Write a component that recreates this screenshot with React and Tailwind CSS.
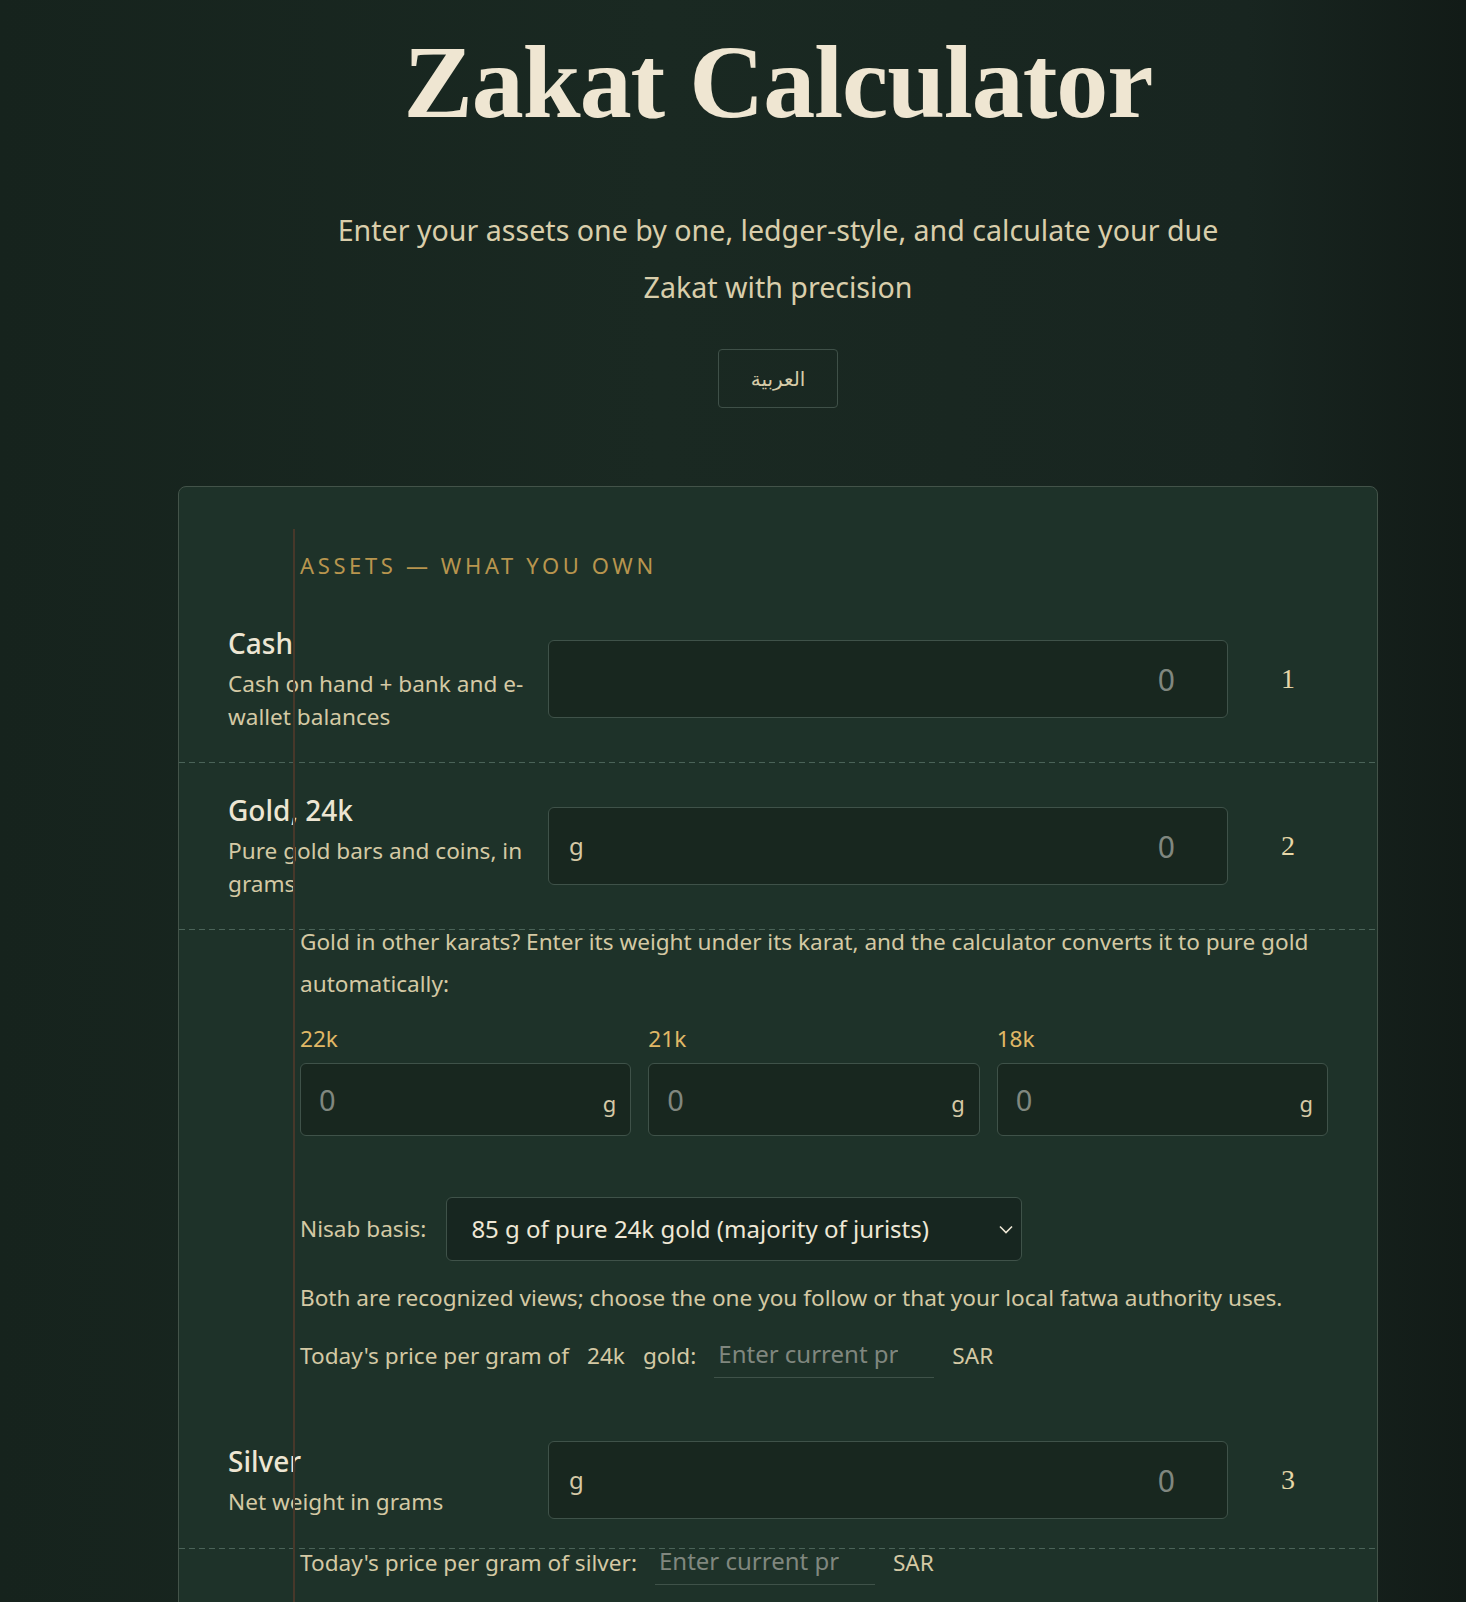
import React from 'react'

const sans = "font-['Noto_Sans','DejaVu_Sans',sans-serif]"

const Dashed = () => (
  <div className="h-px bg-[repeating-linear-gradient(90deg,#4a6358_0_6px,transparent_6px_10px)]" />
)

const AssetRow = ({ title, description, prefix, number }) => (
  <>
    <div className="grid grid-cols-[300px_1fr_80px] items-center gap-x-5 px-[49px] py-[29px]">
      <div className="flex flex-col gap-[6px]">
        <h3 className="text-[28px] leading-[36px] font-medium text-[#ede6d3]">{title}</h3>
        <p className="text-[22.6px] leading-[33px] text-[#d4c9a4]">{description}</p>
      </div>
      <div className="flex h-[78px] items-center rounded-md border border-[#3f5249] bg-[#18271f] pl-5 pr-[52px]">
        {prefix && <span className="text-[24px] text-[#d5c9a6]">{prefix}</span>}
        <input
          placeholder="0"
          className="h-full min-w-0 flex-1 bg-transparent text-right text-[30px] text-[#ede6d3] outline-none placeholder:text-[#80877f]"
        />
      </div>
      <div className="text-center font-['Liberation_Serif',serif] text-[28px] text-[#e6d7a7]">{number}</div>
    </div>
    <Dashed />
  </>
)

const PriceRow = ({ children, className = '' }) => (
  <div className={`flex h-[44px] items-center gap-[18px] text-[22.6px] text-[#d4c9a4] ${className}`}>
    {children}
    <input
      placeholder="Enter current price"
      className="h-[44px] w-[220px] border-b border-[#3f5249] bg-transparent pb-1 pl-1 pr-[36px] text-[24px] text-[#ede6d3] outline-none placeholder:text-[#80877f]"
    />
    <span>SAR</span>
  </div>
)

const karats = ['22k', '21k', '18k']

export default function App() {
  return (
    <div className={`min-h-screen bg-[linear-gradient(90deg,#16231d_0%,#1a2922_45%,#182520_85%,#121b17_100%)] pb-24 ${sans}`}>
      <div className="ml-[178px] w-[1200px]">
        <header className="flex flex-col items-center pt-[30px] text-center">
          <h1 className="font-['Liberation_Serif',serif] text-[104px] leading-none font-bold tracking-[-0.01em] text-[#efe6d2]">
            Zakat Calculator
          </h1>
          <p className="mt-[67px] max-w-[920px] text-[28.6px] leading-[57px] text-[#d9ceab]">
            Enter your assets one by one, ledger-style, and calculate your due Zakat with precision
          </p>
          <button className="mt-[34px] h-[59px] w-[120px] rounded border border-[#3f5048] font-['DejaVu_Sans',sans-serif] text-[20px] text-[#d6cba8]">
            العربية
          </button>
        </header>

        <section className="relative mt-[78px] rounded-lg border border-[#435349] bg-[#1e3229]">
          {/* ledger margin line */}
          <div className="pointer-events-none absolute top-[42px] bottom-0 left-[114px] z-10 w-[2px] bg-[#47382a]" />

          <h2 className="pt-[62px] pl-[121px] text-[22px] leading-[32px] tracking-[0.165em] text-[#b8954e] uppercase">
            Assets — what you own
          </h2>

          <div className="mt-[15px]">
            <AssetRow title="Cash" description="Cash on hand + bank and e-wallet balances" number="1" />
            <AssetRow title="Gold, 24k" description="Pure gold bars and coins, in grams" prefix="g" number="2" />

            <div className="pr-[49px] pb-[34px] pl-[121px]">
              <p className="-mt-[9px] text-[22.6px] leading-[42px] text-[#d4c9a4]">
                Gold in other karats? Enter its weight under its karat, and the calculator converts it to pure gold automatically:
              </p>
              <div className="mt-[18px] grid grid-cols-3 gap-x-[17px]">
                {karats.map((k) => (
                  <div key={k}>
                    <div className="mb-2 text-[22.6px] leading-[32px] text-[#e0b866]">{k}</div>
                    <div className="flex h-[73px] items-center rounded-md border border-[#3f5249] bg-[#18271f] pr-[14px] pl-[18px]">
                      <input
                        placeholder="0"
                        className="h-full min-w-0 flex-1 bg-transparent text-[29px] text-[#ede6d3] outline-none placeholder:text-[#80877f]"
                      />
                      <span className="pt-2 text-[22px] text-[#d5c9a6]">g</span>
                    </div>
                  </div>
                ))}
              </div>

              <div className="mt-[61px] flex items-center gap-5">
                <span className="text-[22.6px] text-[#d4c9a4]">Nisab basis:</span>
                <div className="relative w-[576px]">
                  <select className="h-[64px] w-full appearance-none rounded-md border border-[#3f5249] bg-[#172620] pl-6 text-[24px] text-[#efe8d6] outline-none">
                    <option>85 g of pure 24k gold (majority of jurists)</option>
                    <option>595 g of pure silver (more cautious)</option>
                  </select>
                  <svg
                    className="pointer-events-none absolute top-1/2 right-2 -translate-y-1/2"
                    width="16"
                    height="12"
                    viewBox="0 0 16 12"
                    fill="none"
                  >
                    <path d="M2 3.5 8 9.5 14 3.5" stroke="#efe8d6" strokeWidth="1.6" />
                  </svg>
                </div>
              </div>

              <p className="mt-[21px] text-[22.6px] leading-[32px] text-[#d4c9a4]">
                Both are recognized views; choose the one you follow or that your local fatwa authority uses.
              </p>

              <PriceRow className="mt-[20px]">
                <span>Today's price per gram of</span>
                <span>24k</span>
                <span>gold:</span>
              </PriceRow>
            </div>

            <AssetRow title="Silver" description="Net weight in grams" prefix="g" number="3" />

            <div className="relative -mt-2 pr-[49px] pb-10 pl-[121px]">
              <PriceRow>
                <span>Today's price per gram of silver:</span>
              </PriceRow>
            </div>
          </div>
        </section>
      </div>
    </div>
  )
}
